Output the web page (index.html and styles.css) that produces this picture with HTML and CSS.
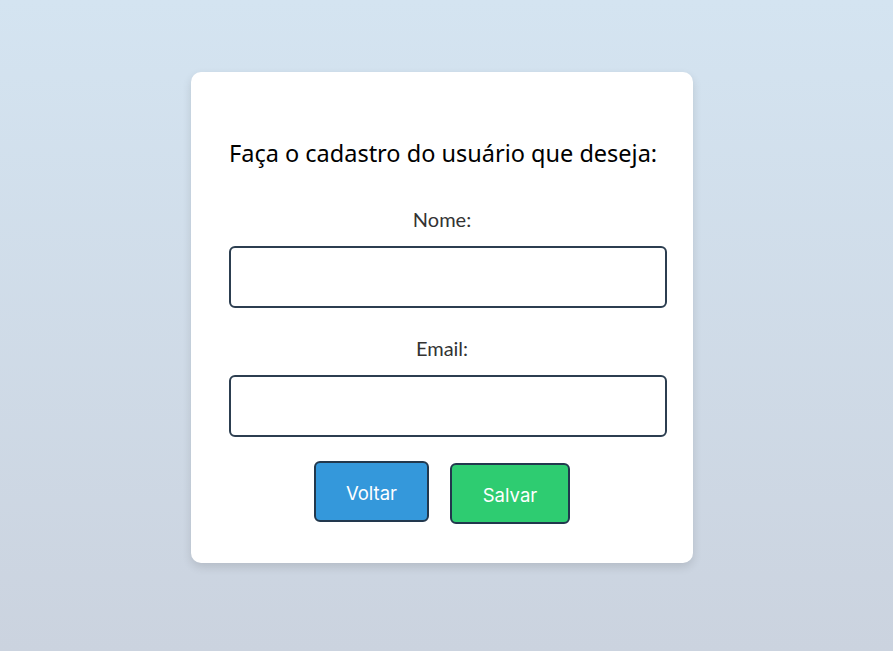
FILE: index.html
```html
<!DOCTYPE html>
<html lang="pt-BR">
<head>
<meta charset="utf-8">
<title>Cadastro</title>
<link rel="stylesheet" href="styles.css">
</head>
<body>
<main class="page">
  <form class="card">
    <h1 class="title">Faça o cadastro do usuário que deseja:</h1>
    <label class="label" for="nome">Nome:</label>
    <input class="field" id="nome" type="text">
    <label class="label label-email" for="email">Email:</label>
    <input class="field" id="email" type="email">
    <div class="actions">
      <button type="button" class="btn btn-back">Voltar</button>
      <button type="button" class="btn btn-save">Salvar</button>
    </div>
  </form>
</main>
</body>
</html>
```
FILE: styles.css
```css
html, body {
  margin: 0;
  height: 100%;
}
body {
  background: linear-gradient(to bottom, #d4e4f1, #cbd3df);
  font-family: "Noto Sans", "Open Sans", sans-serif;
}
.page {
  height: 100%;
  display: flex;
  justify-content: flex-start;
  align-items: flex-start;
  padding: 72px 0 0 191px;
  box-sizing: border-box;
}
.card {
  width: 502px;
  height: 491px;
  box-sizing: border-box;
  background: #fff;
  border-radius: 10px;
  box-shadow: 0 4px 10px rgba(0, 0, 0, 0.12);
  padding: 66px 38px 0 38px;
  display: flex;
  flex-direction: column;
  align-items: flex-start;
}
.title {
  margin: 0;
  width: 426px;
  text-align: center;
  font-weight: 400;
  font-size: 23.5px;
  line-height: 30px;
  color: #000;
  white-space: nowrap;
}
.label {
  align-self: stretch;
  text-align: center;
  font-family: Lato, sans-serif;
  font-size: 20px;
  line-height: 24px;
  color: #333;
  margin-top: 39px;
}
.label-email {
  margin-top: 28px;
}
.field {
  margin-top: 15px;
  width: 438px;
  height: 62px;
  box-sizing: border-box;
  border: 2px solid #2c3e50;
  border-radius: 6px;
  background: #fff;
  font-size: 16px;
  padding: 0 10px;
  outline: none;
}
.actions {
  align-self: stretch;
  display: flex;
  justify-content: center;
  align-items: flex-start;
  gap: 21px;
  margin-top: 24px;
}
.btn {
  height: 61px;
  box-sizing: border-box;
  border: 2px solid #22384d;
  border-radius: 6px;
  color: #fff;
  font-family: Inter, sans-serif;
  font-size: 18.5px;
  padding: 2px 0 0;
  cursor: pointer;
}
.btn-back {
  width: 115px;
  background: #3498db;
}
.btn-save {
  width: 120px;
  background: #2ecc71;
  margin-top: 2px;
}
```
